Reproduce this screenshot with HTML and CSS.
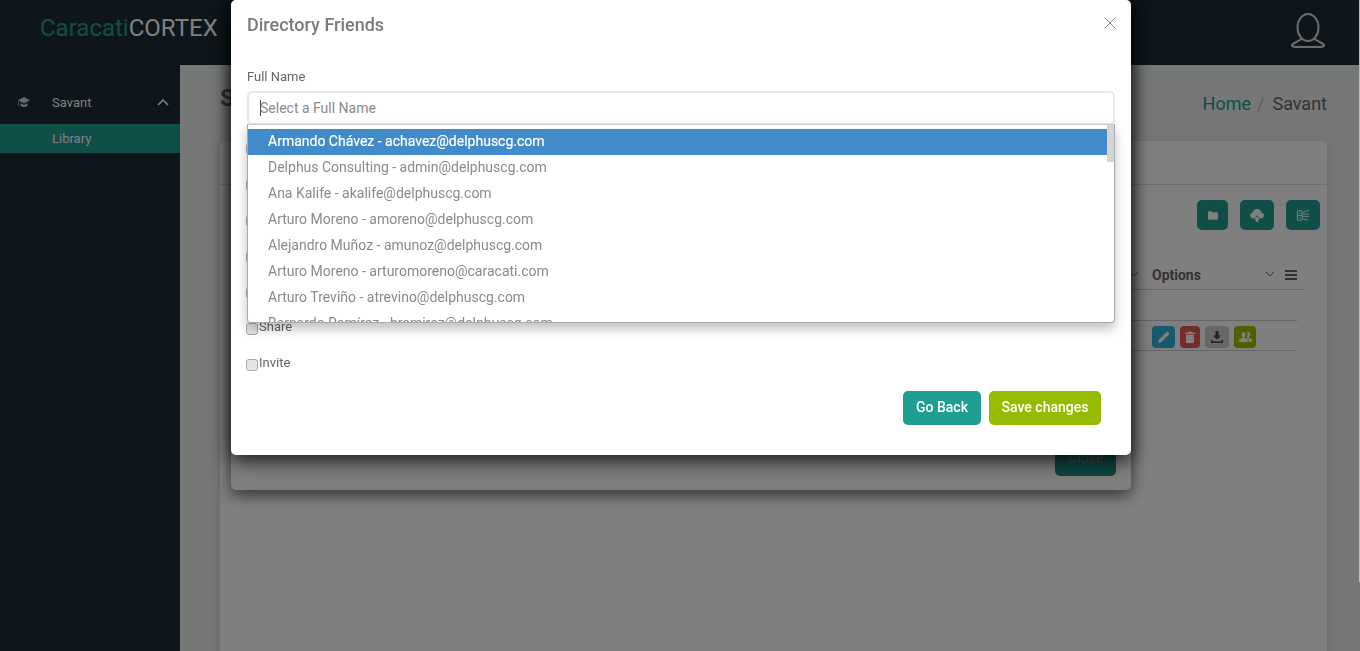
FILE: index.html
```html
<!DOCTYPE html>
<html lang="en">
<head>
<meta charset="utf-8">
<title>CaracatiCORTEX</title>
<link rel="stylesheet" href="styles.css">
</head>
<body>
<div class="app">
  <header class="topbar">
    <div class="logo"><span class="logo-a">Caracati</span>CORTEX</div>
    <svg class="user" viewBox="0 0 36 36" fill="none" stroke="currentColor" stroke-width="2"><ellipse cx="18" cy="14.500" rx="10.500" ry="13.500"/><path d="M11.500 25.500C9.500 28.500 4 29 2 32c0 1.500 2 2 4 2h24c2 0 4-.5 4-2-2-3-7.500-3.500-9.500-6.500"/></svg>
  </header>
  <div class="main">
    <nav class="sidebar">
      <div class="nav-item">
        <svg class="cap" viewBox="0 0 12 11"><path fill="#cfcfcf" d="M6 0 12 3.200 6 6.400 0 3.200z"/><path fill="#cfcfcf" d="M2.500 6v2.500C4 10.600 8 10.600 9.500 8.500V6L6 7.900z"/><path fill="#6f9cc4" d="M0 3.200h1V9H0z"/></svg>
        <span class="nav-text">Savant</span>
        <svg class="chev" viewBox="0 0 12 7" fill="none" stroke="currentColor" stroke-width="1.600"><path d="M1 6 6 1l5 5"/></svg>
      </div>
      <div class="nav-sub">Library</div>
    </nav>
    <section class="content">
      <div class="page-head">
        <h1 class="page-title">Savant</h1>
        <div class="crumbs"><span class="crumb-home">Home</span><span class="crumb-sep">/</span><span class="crumb-cur">Savant</span></div>
      </div>
      <div class="card">
        <div class="card-head"></div>
        <div class="card-body">
          <div class="tools">
            <button class="tool tool-s"><svg viewBox="0 0 12 10" class="ti"><path fill="currentColor" d="M0 1.200C0 .6.500 0 1 0h3l1.200 1.200H11c.6 0 1 .5 1 1V9c0 .6-.4 1-1 1H1c-.5 0-1-.4-1-1z"/></svg></button>
            <button class="tool"><svg viewBox="0 0 14 13" class="ti ti-w"><path fill="currentColor" d="M3.500 9.500C1.500 9.500 0 8.300 0 6.500 0 5 1 3.900 2.400 3.700 2.900 1.500 4.800 0 7 0c2.300 0 4.200 1.500 4.600 3.700C13 3.900 14 5 14 6.500c0 1.800-1.500 3-3.500 3H9.800L7 6.600 4.200 9.500z"/><path fill="currentColor" d="M7 7.500 10.200 10.500H8.300V13H5.700V10.500H3.800z"/></svg></button>
            <button class="tool"><svg viewBox="0 0 15 13" class="ti ti-w" fill="none" stroke="currentColor" stroke-width="1"><path d="M1.500 1.500h5v10h-5zM1.500 6.500h5M3 4h2M3 9h2M7 3l7-2M7 5h7M7 7.500h7M7 10l6 1.500"/></svg></button>
          </div>
          <div class="table">
            <div class="th-row">
              <svg class="th-chev th-chev-l" viewBox="0 0 10 6" fill="none" stroke="currentColor" stroke-width="1"><path d="M1 1l4 4 4-4"/></svg>
              <span class="th-name">Options</span>
              <svg class="th-chev" viewBox="0 0 10 6" fill="none" stroke="currentColor" stroke-width="1"><path d="M1 1l4 4 4-4"/></svg>
              <svg class="th-menu" viewBox="0 0 12 10" fill="currentColor"><path d="M0 0h12v2H0zM0 4h12v2H0zM0 8h12v2H0z"/></svg>
            </div>
            <div class="filter-row"></div>
            <div class="data-row">
              <button class="act act-blue"><svg viewBox="0 0 12 12" class="ai"><path fill="currentColor" d="M0 12l.8-3.200L8.500 1.100c.5-.5 1.200-.5 1.700 0l.7.700c.5.500.5 1.200 0 1.700L3.200 11.200z"/></svg></button>
              <button class="act act-red"><svg viewBox="0 0 10 12" class="ai"><path fill="currentColor" d="M0 1.500h3L3.500.5h3l.5 1h3V3H0zM1 3.800h8V11c0 .6-.4 1-1 1H2c-.6 0-1-.4-1-1z"/></svg></button>
              <button class="act act-grey"><svg viewBox="0 0 12 12" class="ai"><path fill="currentColor" d="M4.500 0h3v4.500H10L6 8.500 2 4.500h2.500zM0 9h1.500v1.500h9V9H12v3H0z"/></svg></button>
              <button class="act act-green"><svg viewBox="0 0 14 11" class="ai ai-w"><path fill="currentColor" d="M4.800 0C6.200 0 7 1.100 7 2.700 7 4 6.500 5 5.800 5.600v1L9.500 8v3H0V8l3.800-1.400v-1C3.100 5 2.600 4 2.600 2.700 2.600 1.100 3.400 0 4.800 0zM9.800 0C11.200 0 12 1.100 12 2.700c0 1.300-.5 2.300-1.200 2.900v1L14 8v3h-3.500V7.500L8.500 6.300V5.200c.5-.6.800-1.500.8-2.500 0-1-.2-1.800-.7-2.400.3-.2.700-.3 1.200-.3z"/></svg></button>
            </div>
          </div>
        </div>
      </div>
    </section>
  </div>

  <div class="modal modal-back">
    <div class="back-foot"><button class="close-btn">Close</button></div>
  </div>
</div>

<div class="overlay"></div>
<div class="page-scroll"></div>

<div class="modal modal-top">
  <div class="modal-head">
    <h2 class="modal-title">Directory Friends</h2>
    <svg class="modal-x" viewBox="0 0 12 12" fill="none" stroke="currentColor" stroke-width="1"><path d="M.5.500l11 11M11.500.500l-11 11"/></svg>
  </div>
  <div class="modal-body">
    <label class="field-label">Full Name</label>
    <div class="select-wrap">
      <div class="select-input"><span class="caret"></span><span class="placeholder">Select a Full Name</span></div>
      <div class="dropdown">
        <ul class="options">
          <li class="option option-active">Armando Chávez - achavez@delphuscg.com</li>
          <li class="option">Delphus Consulting - admin@delphuscg.com</li>
          <li class="option">Ana Kalife - akalife@delphuscg.com</li>
          <li class="option">Arturo Moreno - amoreno@delphuscg.com</li>
          <li class="option">Alejandro Muñoz - amunoz@delphuscg.com</li>
          <li class="option">Arturo Moreno - arturomoreno@caracati.com</li>
          <li class="option">Arturo Treviño - atrevino@delphuscg.com</li>
          <li class="option">Bernardo Ramírez - bramirez@delphuscg.com</li>
        </ul>
        <div class="thumb"></div>
      </div>
    </div>
    <div class="checks">
      <label class="check"><input type="checkbox"></label>
      <label class="check"><input type="checkbox"></label>
      <label class="check"><input type="checkbox"></label>
      <label class="check"><input type="checkbox"></label>
      <label class="check"><input type="checkbox"></label>
      <label class="check"><input type="checkbox"><span>Share</span></label>
      <label class="check"><input type="checkbox"><span>Invite</span></label>
    </div>
    <div class="modal-actions">
      <button class="btn btn-teal">Go Back</button>
      <button class="btn btn-lime">Save changes</button>
    </div>
  </div>
</div>
</body>
</html>
```

FILE: styles.css
```css
* { box-sizing: border-box; }
html, body { margin: 0; height: 100%; overflow: hidden; }
body { font-family: Roboto, "Liberation Sans", sans-serif; font-size: 14px; color: #666; background: #ecf0ef; }
button { font-family: inherit; border: 0; padding: 0; }

.app { height: 651px; display: flex; flex-direction: column; overflow: hidden; }
.topbar { height: 65px; flex: none; background: #1c2a36; display: flex; align-items: center; justify-content: space-between; padding: 0 33px 0 40px; border-bottom: 1px solid #18242e; }
.logo { font-size: 24px; color: #fff; margin-top: -9px; }
.logo-a { color: #209e91; }
.user { width: 36px; height: 36px; color: #d8d8d8; margin-top: -3px; margin-right: 1px; }

.main { flex: 1; display: flex; min-height: 0; }
.sidebar { width: 180px; flex: none; background: #1c2a36; padding-top: 24px; color: #fff; font-size: 13px; }
.nav-item { height: 27px; display: flex; align-items: center; padding: 0 11px 0 18px; margin-bottom: 8px; }
.cap { width: 12px; height: 11px; margin-right: 22px; }
.nav-text { flex: 1; }
.chev { width: 12px; height: 7px; }
.nav-sub { height: 29px; background: #209e91; padding-left: 52px; line-height: 29px; }

.content { flex: 1; padding: 0 33px 0 40px; min-width: 0; overflow: hidden; }
.page-head { height: 76px; display: flex; align-items: flex-start; justify-content: space-between; }
.page-title { margin: 19px 0 0; font-size: 24px; font-weight: 700; line-height: 28px; color: #666; }
.crumbs { font-size: 18px; line-height: 22px; margin-top: 28px; display: flex; }
.crumb-home { color: #1f9a94; }
.crumb-sep { color: #bbb; margin: 0 8px 0 6px; }
.crumb-cur { color: #666; }

.card { height: 600px; background: #fff; border-radius: 5px; box-shadow: 0 4px 12px rgba(0,0,0,.15); }
.card-head { height: 44px; border-bottom: 1px solid #ddd; }
.card-body { padding: 15px 7px 0 0; }
.tools { display: flex; justify-content: flex-end; gap: 12px; height: 30px; }
.tool { width: 34px; height: 30px; border-radius: 5px; background: #209e91; color: #fff; display: flex; align-items: center; justify-content: center; }
.tool-s { width: 31px; }
.ti { width: 10px; height: 9px; }
.ti-w { width: 14px; height: 13px; }

.table { margin: 29px 16px 0 auto; width: 175px; }
.th-row { height: 31px; border-bottom: 1px solid #ccc; display: flex; align-items: center; padding: 2px 7px 0 23px; color: #666; position: relative; }
.th-name { flex: 1; font-weight: 700; font-size: 14px; }
.th-chev { width: 10px; height: 6px; margin-right: 10px; margin-top: -3px; }
.th-chev-l { position: absolute; left: 0; top: 12px; margin: 0; }
.th-menu { width: 12px; height: 10px; }
.filter-row { height: 31px; border-bottom: 1px solid #ccc; margin-right: 7px; }
.data-row { height: 30px; border-bottom: 1px solid #ccc; margin-right: 7px; padding: 5px 0 0 23px; display: flex; gap: 5px; }
.act { height: 22px; width: 21px; border-radius: 4px; color: #fff; display: flex; align-items: center; justify-content: center; }
.ai { width: 12px; height: 12px; }
.ai-w { width: 13px; height: 10px; }
.act-blue { width: 23px; background: #2db4dc; }
.act-red { width: 20px; background: #e85656; }
.act-grey { width: 24px; background: #cfcfcf; color: #444; }
.act-green { width: 22px; background: #9ac200; color: #fff; }

.modal { position: fixed; left: 231px; width: 900px; background: #fff; border-radius: 5px; }
.modal-back { top: 0; height: 490px; box-shadow: 0 5px 15px rgba(0,0,0,.6); display: flex; align-items: flex-end; justify-content: flex-end; padding: 0 15px 14px 0; }
.close-btn { display: block; width: 61px; height: 36px; background: #1c8d81; border-radius: 5px; color: #8f9f9c; font-size: 14px; }

.overlay { position: fixed; inset: 0; background: rgba(0,0,0,.5); }
.page-scroll { position: fixed; right: 0; top: 0; width: 1px; height: 582px; background: #bdbdbd; }

.modal-top { top: 0; height: 455px; box-shadow: 0 5px 20px rgba(0,0,0,.85); }
.modal-head { height: 58px; padding: 0 15px 0 16px; display: flex; justify-content: space-between; }
.modal-title { margin: 14px 0 0; font-size: 18px; line-height: 21px; font-weight: 500; color: #7a7a7a; }
.modal-x { width: 12px; height: 12px; margin-top: 17px; color: #888; }
.modal-body { padding: 0 16px; position: relative; }
.field-label { display: block; font-size: 13px; line-height: 15px; color: #666; margin-top: 11px; }
.select-wrap { position: relative; margin-top: 7px; }
.select-input { height: 34px; border: 2px solid #e8e8e8; border-radius: 5px; display: flex; align-items: center; padding-left: 11px; font-size: 14px; color: #8a8a8a; background: #fff; }
.caret { width: 1px; height: 16px; background: #444; margin-right: -1px; }
.dropdown { position: absolute; left: 0; right: 0; top: 33px; height: 199px; background: #fff; border: 1px solid #aaa; border-top-color: #ccc; border-radius: 0 0 4px 4px; overflow: hidden; box-shadow: 0 6px 12px rgba(0,0,0,.25); z-index: 2; }
.options { list-style: none; margin: 4px 7px 0 0; padding: 0; }
.option { height: 26px; line-height: 25px; padding-left: 20px; font-size: 14px; color: #8a8a8a; }
.option-active { background: #428bca; color: #fff; -webkit-text-stroke: .2px #fff; }
.thumb { position: absolute; right: 0; top: 0; width: 7px; height: 37px; background: #d4d4d4; }

.checks { margin-top: 6px; }
.check { display: flex; height: 36px; font-size: 13px; line-height: 15px; color: #666; }
.check input { appearance: none; margin: 12px 1px 0 -1px; width: 12px; height: 12px; background: #e4e4e4; border: 1px solid #aaa; border-radius: 3px; }
.check span { margin-top: 8px; }
.modal-actions { display: flex; justify-content: flex-end; gap: 8px; padding-right: 14px; margin-top: 8px; }
.btn { height: 34px; padding-bottom: 2px; border-radius: 5px; color: #fff; font-size: 14px; font-weight: 500; }
.btn-teal { width: 78px; background: #209e91; }
.btn-lime { width: 112px; background: #96bb00; }
```
